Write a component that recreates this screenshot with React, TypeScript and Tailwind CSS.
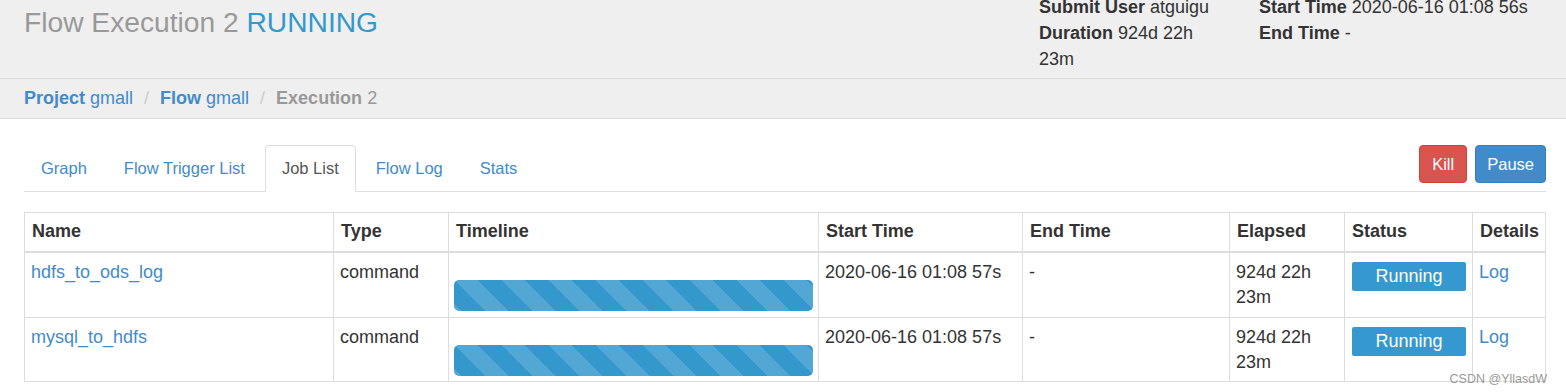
import React from 'react';

const tabs = ['Graph', 'Flow Trigger List', 'Job List', 'Flow Log', 'Stats'];

const jobs = [
  { name: 'hdfs_to_ods_log', h: 'h-[65px]' },
  { name: 'mysql_to_hdfs', h: 'h-[64px]' },
];

const headers = ['Name', 'Type', 'Timeline', 'Start Time', 'End Time', 'Elapsed', 'Status', 'Details'];

function StripedBar() {
  return (
    <div className="mx-[5px] mt-[27px] h-[31px] rounded-[5px] bg-[#3598cc] bg-[linear-gradient(45deg,rgba(255,255,255,.15)_25%,transparent_25%,transparent_50%,rgba(255,255,255,.15)_50%,rgba(255,255,255,.15)_75%,transparent_75%,transparent)] bg-[length:47px_47px]" />
  );
}

export default function App() {
  return (
    <div className="relative w-[1566px] h-[392px] overflow-hidden bg-white text-[#333] font-['Liberation_Sans',Arial,sans-serif]">
      {/* Header */}
      <div className="flex h-[79px] bg-[#efefef] border-b border-[#dcdcdc] pl-[24px]">
        <div className="w-[1015px]">
          <h1 className="mt-[8px] text-[28.2px] leading-none text-[#999]">
            Flow Execution 2 <span className="text-[#3498cc]">RUNNING</span>
          </h1>
        </div>
        <div className="flex -mt-[6px] text-[18px] leading-[26px]">
          <div className="w-[220px] pr-[36px]">
            <div><b>Submit User</b> atguigu</div>
            <div><b>Duration</b> 924d 22h 23m</div>
          </div>
          <div>
            <div><b>Start Time</b> 2020-06-16 01:08 56s</div>
            <div><b>End Time</b> -</div>
          </div>
        </div>
      </div>

      {/* Breadcrumb */}
      <div className="flex items-center h-[40px] bg-[#efefef] border-b border-[#dcdcdc] pl-[24px] text-[18px]">
        <span className="text-[#428bca]"><b>Project</b> gmall</span>
        <span className="px-[11px] text-[#ccc]">/</span>
        <span className="text-[#428bca]"><b>Flow</b> gmall</span>
        <span className="px-[11px] text-[#ccc]">/</span>
        <span className="text-[#999]"><b>Execution</b> 2</span>
      </div>

      <div className="pl-[24px] pr-[20px]">
        {/* Tabs */}
        <div className="mt-[26px] flex border-b border-[#ddd] text-[16.5px] leading-[24px]">
          {tabs.map((t) => (
            <div
              key={t}
              className={
                t === 'Job List'
                  ? 'mr-[3px] -mb-px px-[16px] pt-[10px] pb-[11px] border border-[#ddd] border-b-white rounded-t-[4px] bg-white text-[#555]'
                  : 'mr-[3px] -mb-px px-[16px] pt-[10px] pb-[11px] border border-transparent text-[#428bca]'
              }
            >
              {t}
            </div>
          ))}
          <div className="ml-auto flex gap-[8px] self-start">
            <button className="h-[38px] px-[12px] rounded-[4px] bg-[#d9534f] border border-[#d43f3a] text-white">Kill</button>
            <button className="h-[38px] px-[11px] rounded-[4px] bg-[#428bca] border border-[#357ebd] text-white">Pause</button>
          </div>
        </div>

        {/* Job table */}
        <div className="mt-[20px] grid grid-cols-[309px_115px_370px_204px_207px_115px_128px_73px] border-t border-l border-[#ddd] text-[18px] leading-[25px]">
          {headers.map((h) => (
            <div key={h} className="h-[40px] px-[7px] pt-[6px] border-r border-b-2 border-[#ddd] font-bold">
              {h}
            </div>
          ))}
          {jobs.map((j) => (
            <React.Fragment key={j.name}>
              <div className={`${j.h} px-[6px] pt-[7px] border-r border-b border-[#ddd] text-[#428bca]`}>{j.name}</div>
              <div className={`${j.h} px-[6px] pt-[7px] border-r border-b border-[#ddd]`}>command</div>
              <div className={`${j.h} border-r border-b border-[#ddd]`}>
                <StripedBar />
              </div>
              <div className={`${j.h} px-[6px] pt-[7px] border-r border-b border-[#ddd]`}>2020-06-16 01:08 57s</div>
              <div className={`${j.h} px-[6px] pt-[7px] border-r border-b border-[#ddd]`}>-</div>
              <div className={`${j.h} px-[6px] pt-[7px] border-r border-b border-[#ddd]`}>924d 22h 23m</div>
              <div className={`${j.h} px-[7px] pt-[9px] border-r border-b border-[#ddd]`}>
                <div className="w-[114px] h-[29px] flex items-center justify-center rounded-[2px] bg-[#3598d0] text-white">
                  Running
                </div>
              </div>
              <div className={`${j.h} px-[6px] pt-[7px] border-r border-b border-[#ddd] text-[#428bca]`}>Log</div>
            </React.Fragment>
          ))}
        </div>
      </div>

      <div className="absolute right-[19px] bottom-[7px] text-[12.5px] leading-none text-[#999]">CSDN @YllasdW</div>
    </div>
  );
}
